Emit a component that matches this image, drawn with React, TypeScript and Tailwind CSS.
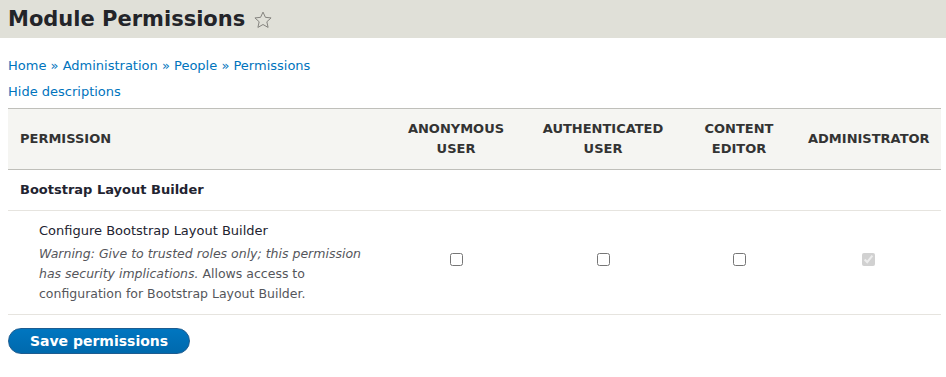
import { useState } from 'react';

const roles = [
  { key: 'anon', label: ['ANONYMOUS', 'USER'], width: 'w-[136px]' },
  { key: 'auth', label: ['AUTHENTICATED', 'USER'], width: 'w-[158px]' },
  { key: 'editor', label: ['CONTENT', 'EDITOR'], width: 'w-[114px]' },
  { key: 'admin', label: ['ADMINISTRATOR'], width: 'w-[145px]' },
];

function Star() {
  return (
    <svg width="20" height="20" viewBox="0 0 24 24" className="ml-2 mt-[1px]">
      <path
        d="M12 2.5l2.9 6.3 6.8.7-5.1 4.6 1.5 6.8L12 17.4l-6.1 3.5 1.5-6.8L2.3 9.5l6.8-.7z"
        fill="none"
        stroke="#85847f"
        strokeWidth="1.2"
        strokeLinejoin="round"
      />
    </svg>
  );
}

export default function App() {
  const [checked, setChecked] = useState<Record<string, boolean>>({
    anon: false,
    auth: false,
    editor: false,
  });

  return (
    <div className="min-h-[377px] bg-white text-[13px] text-[#222330] font-['DejaVu_Sans',sans-serif]">
      <div className="h-[38px] bg-[#e0e0d8] px-2 flex items-center">
        <h1 className="text-[21px] font-bold text-[#232429] leading-none">Module Permissions</h1>
        <Star />
      </div>

      <div className="px-2">
        <nav className="mt-[18px] leading-5 text-[#0074bd]">
          <a href="#">Home</a> <span>»</span> <a href="#">Administration</a> <span>»</span>{' '}
          <a href="#">People</a> <span>»</span> <a href="#">Permissions</a>
        </nav>
        <div className="mt-[6px] leading-5">
          <a href="#" className="text-[#0074bd]">Hide descriptions</a>
        </div>

        <table className="mt-[6px] w-[933px] table-fixed border-collapse">
          <thead>
            <tr className="bg-[#f5f5f2] border-y border-[#bfbfba]">
              <th className="w-[380px] h-[61px] px-3 text-left font-bold uppercase leading-5 text-[#333]">
                Permission
              </th>
              {roles.map((r) => (
                <th key={r.key} className={`${r.width} px-3 text-center font-bold leading-5 text-[#333] whitespace-nowrap`}>
                  {r.label.map((l, i) => (
                    <div key={i}>{l}</div>
                  ))}
                </th>
              ))}
            </tr>
          </thead>
          <tbody>
            <tr className="border-b border-[#e6e4df]">
              <td colSpan={5} className="h-[41px] px-3 font-bold text-[#222330]">
                Bootstrap Layout Builder
              </td>
            </tr>
            <tr className="border-b border-[#e6e4df]">
              <td className="pl-[31px] pr-3 pt-[10px] pb-[10px] align-top">
                <div className="leading-5 text-[#222330]">Configure Bootstrap Layout Builder</div>
                <div className="mt-[3px] max-w-[330px] text-[12.5px] leading-5 text-[#55565b]">
                  <em>Warning: Give to trusted roles only; this permission has security implications.</em> Allows
                  access to configuration for Bootstrap Layout Builder.
                </div>
              </td>
              {roles.map((r) => (
                <td key={r.key} className="align-middle">
                  {r.key === 'admin' ? (
                    <input type="checkbox" checked disabled readOnly className="block mx-auto mb-[6px]" />
                  ) : (
                    <input
                      type="checkbox"
                      checked={checked[r.key]}
                      onChange={(e) => setChecked({ ...checked, [r.key]: e.target.checked })}
                      className="block mx-auto mb-[6px]"
                    />
                  )}
                </td>
              ))}
            </tr>
          </tbody>
        </table>

        <button
          type="button"
          className="mt-[13px] h-[26px] w-[182px] rounded-full border border-[#1e5c90] bg-gradient-to-b from-[#0076c0] to-[#0069ad] text-[14px] font-bold text-white"
        >
          Save permissions
        </button>
      </div>
    </div>
  );
}
